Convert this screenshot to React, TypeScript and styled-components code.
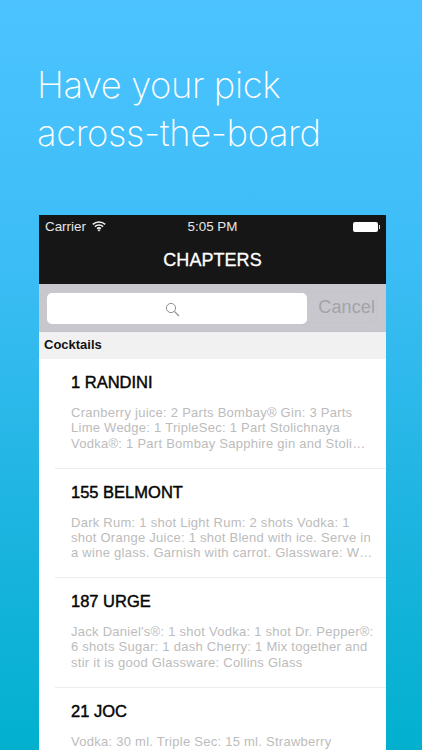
import { createGlobalStyle } from "styled-components";
import styled from "styled-components";

const Global = createGlobalStyle`
  html, body {
    margin: 0;
    padding: 0;
  }
  * {
    box-sizing: border-box;
  }
`;

const Page = styled.div`
  width: 422px;
  height: 750px;
  overflow: hidden;
  display: flex;
  flex-direction: column;
  padding: 61px 0 0 39px;
  background: linear-gradient(180deg, #4cc3ff 0%, #3cbdf5 35%, #1cb4e0 70%, #02b0ce 100%);
  font-family: "Liberation Sans", Arial, sans-serif;
`;

const Headline = styled.h1`
  margin: 0 0 58px -2px;
  color: #fff;
  font-family: Inter, "Liberation Sans", sans-serif;
  font-size: 36.4px;
  font-weight: 200;
  line-height: 48px;
  letter-spacing: -0.4px;
`;

const Phone = styled.div`
  width: 347px;
  flex: none;
  background: #fff;
`;

const Header = styled.div`
  height: 69px;
  background: #161616;
  color: #fff;
  display: flex;
  flex-direction: column;
`;

const StatusBar = styled.div`
  height: 23px;
  padding: 0 6px;
  display: grid;
  grid-template-columns: 1fr auto 1fr;
  align-items: center;
  font-size: 13.4px;
  color: #e6e6e6;
`;

const StatusLeft = styled.div`
  display: flex;
  align-items: center;
  gap: 6px;
`;

const Battery = styled.div`
  justify-self: end;
  display: flex;
  align-items: center;
  gap: 1px;
`;

const BatteryBody = styled.div`
  width: 25px;
  height: 10px;
  background: #fff;
  border-radius: 2px;
`;

const BatteryTip = styled.div`
  width: 1.5px;
  height: 4px;
  background: #ddd;
`;

const NavTitle = styled.div`
  flex: 1;
  display: flex;
  align-items: center;
  justify-content: center;
  padding-bottom: 1px;
  font-size: 18px;
  font-weight: 400;
  letter-spacing: 0.05px;
  -webkit-text-stroke: 0.3px #fff;
`;

const SearchBar = styled.div`
  height: 48px;
  background: #c8c7cd;
  display: flex;
  align-items: center;
  padding: 1px 9px 0 8px;
  border-bottom: 1px solid #c2c1c7;
`;

const SearchField = styled.div`
  width: 260px;
  height: 31px;
  padding: 3px 10px 0 0;
  background: #fff;
  border-radius: 5px;
  display: flex;
  align-items: center;
  justify-content: center;
`;

const CancelButton = styled.span`
  flex: 1;
  height: 31px;
  margin-top: -1px;
  padding-right: 1px;
  display: flex;
  align-items: center;
  justify-content: flex-end;
  color: #a3a3a8;
  font-size: 18px;
  letter-spacing: 0.1px;
  border: 1px solid #c5c4ca;
  border-left: none;
  border-radius: 0 5px 5px 0;
`;

const SectionHeader = styled.div`
  height: 27px;
  background: #f1f1f1;
  padding: 0 5px 2px;
  display: flex;
  align-items: center;
  font-size: 13px;
  font-weight: 700;
  color: #111;
`;

const RowList = styled.div`
  display: flex;
  flex-direction: column;
`;

const Row = styled.div`
  height: 109.5px;
  margin-left: 16px;
  padding: 14px 10px 0 16px;
  border-bottom: 1px solid #ececec;
`;

const RowTitle = styled.div`
  font-size: 16.5px;
  font-weight: 400;
  line-height: 18px;
  color: #050505;
  -webkit-text-stroke: 0.45px #050505;
`;

const RowBody = styled.div`
  margin-top: 14px;
  font-size: 13px;
  line-height: 15.4px;
  letter-spacing: 0.26px;
  color: #bcbcbc;
  white-space: nowrap;
`;

const drinks = [
  {
    title: "1 RANDINI",
    lines: [
      "Cranberry juice: 2 Parts Bombay® Gin: 3 Parts",
      "Lime Wedge: 1 TripleSec: 1 Part Stolichnaya",
      "Vodka®: 1 Part Bombay Sapphire gin and Stoli…",
    ],
  },
  {
    title: "155 BELMONT",
    lines: [
      "Dark Rum: 1 shot Light Rum: 2 shots Vodka: 1",
      "shot Orange Juice: 1 shot Blend with ice. Serve in",
      "a wine glass. Garnish with carrot. Glassware: W…",
    ],
  },
  {
    title: "187 URGE",
    lines: [
      "Jack Daniel's®: 1 shot Vodka: 1 shot Dr. Pepper®:",
      "6 shots Sugar: 1 dash Cherry: 1 Mix together and",
      "stir it is good Glassware: Collins Glass",
    ],
  },
  {
    title: "21 JOC",
    lines: ["Vodka: 30 ml. Triple Sec: 15 ml. Strawberry"],
  },
];

const WifiIcon = () => (
  <svg width="14" height="11" viewBox="0 0 14 11" fill="none" stroke="#f2f2f2" strokeWidth="1.5">
    <path d="M0.8 3.4C4.3 0.2 9.7 0.2 13.2 3.4" />
    <path d="M2.9 5.6C5.2 3.6 8.8 3.6 11.1 5.6" />
    <path d="M5 7.6C6.1 6.8 7.9 6.8 9 7.6" />
    <path d="M7 10.4L5.5 8.9C6.4 8.3 7.6 8.3 8.5 8.9Z" fill="#f2f2f2" stroke="none" />
  </svg>
);

const SearchIcon = () => (
  <svg width="15" height="15" viewBox="0 0 15 15" fill="none" stroke="#8f8f94">
    <circle cx="6" cy="6" r="4.6" strokeWidth="1" />
    <path d="M9.4 9.4L14 14" strokeWidth="1.2" />
  </svg>
);

export default function App() {
  return (
    <Page>
      <Global />
      <Headline>
        Have your pick
        <br />
        across-the-board
      </Headline>
      <Phone>
        <Header>
          <StatusBar>
            <StatusLeft>
              Carrier
              <WifiIcon />
            </StatusLeft>
            <span>5:05 PM</span>
            <Battery>
              <BatteryBody />
              <BatteryTip />
            </Battery>
          </StatusBar>
          <NavTitle>CHAPTERS</NavTitle>
        </Header>
        <SearchBar>
          <SearchField>
            <SearchIcon />
          </SearchField>
          <CancelButton>Cancel</CancelButton>
        </SearchBar>
        <SectionHeader>Cocktails</SectionHeader>
        <RowList>
          {drinks.map((drink) => (
            <Row key={drink.title}>
              <RowTitle>{drink.title}</RowTitle>
              <RowBody>
                {drink.lines.map((line) => (
                  <div key={line}>{line}</div>
                ))}
              </RowBody>
            </Row>
          ))}
        </RowList>
      </Phone>
    </Page>
  );
}
